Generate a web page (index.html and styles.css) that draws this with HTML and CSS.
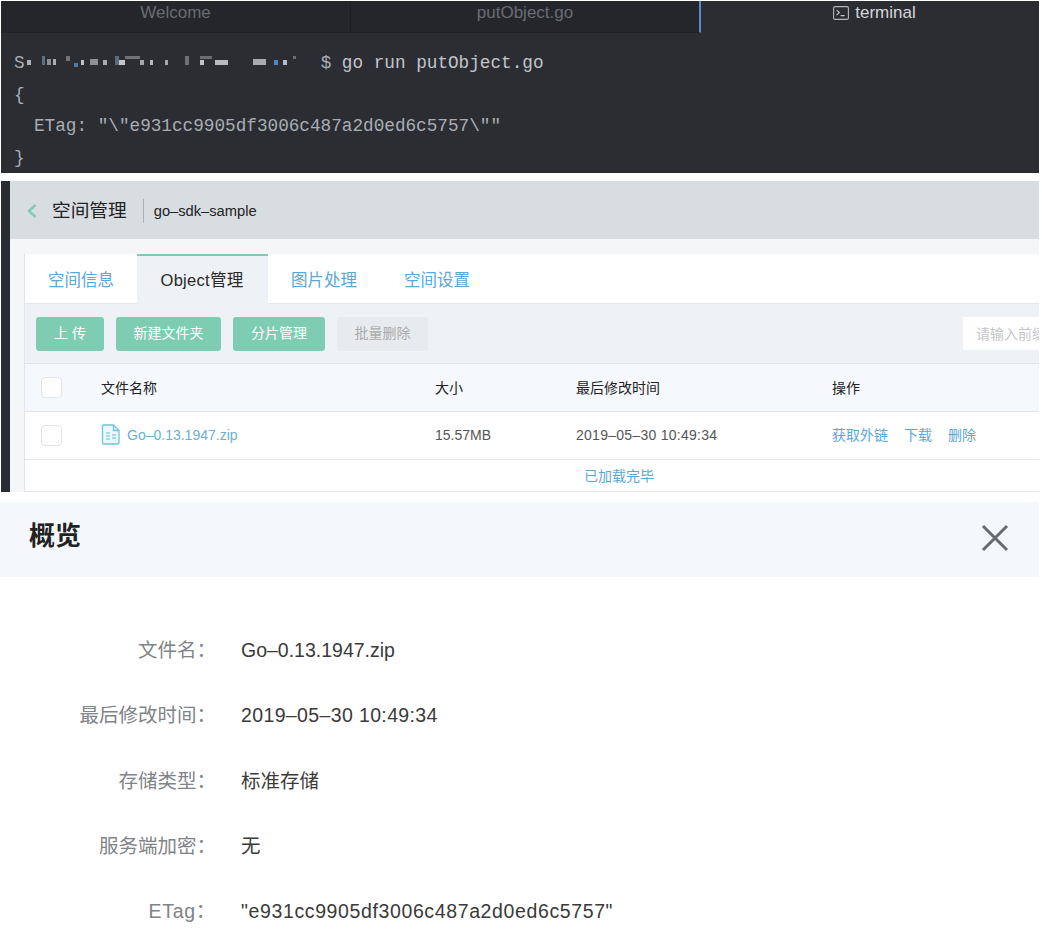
FILE: index.html
```html
<!DOCTYPE html>
<html lang="zh-CN">
<head>
<meta charset="utf-8">
<title>go-sdk-sample</title>
<link rel="stylesheet" href="styles.css">
</head>
<body>
<div class="shot">
  <section class="terminal">
    <div class="term-tabs">
      <div class="term-tab">Welcome</div>
      <div class="term-tab term-tab-last">putObject.go</div>
      <div class="term-tab term-tab-active">
        <svg class="term-icon" width="16" height="14" viewBox="0 0 16 14"><rect x="0.6" y="0.6" width="14.8" height="12.8" rx="1.5" fill="none" stroke="#b4b6ba" stroke-width="1.1"/><path d="M3.6 4.2 6.4 6.6 3.6 9M7.6 9.6h4" fill="none" stroke="#c4c6ca" stroke-width="1.1"/></svg>
        <span>terminal</span>
      </div>
    </div>
    <div class="code">
      <div class="code-line">S<svg class="masked" width="296" height="16" viewBox="0 0 296 16"><rect x="2" y="6" width="4" height="5" fill="#aeb1b5"/><rect x="17" y="2" width="3" height="9" fill="#5f7080"/><rect x="22" y="5" width="4" height="6" fill="#8c9096"/><rect x="28" y="5" width="3" height="6" fill="#a9acb0"/><rect x="41" y="2" width="4" height="5" fill="#6f7278"/><rect x="49" y="9" width="4" height="4" fill="#4e7ba0"/><rect x="56" y="6" width="3" height="5" fill="#c0c2c5"/><rect x="65" y="5" width="8" height="6" fill="#8d9196"/><rect x="78" y="6" width="4" height="5" fill="#a8abaf"/><rect x="90" y="2" width="4" height="9" fill="#5a6b7b"/><rect x="94" y="6" width="6" height="5" fill="#c3c5c8"/><rect x="100" y="2" width="15" height="3" fill="#70747a"/><rect x="115" y="6" width="4" height="5" fill="#a3a6aa"/><rect x="125" y="6" width="3" height="5" fill="#b5b7ba"/><rect x="140" y="6" width="3" height="5" fill="#a5a8ac"/><rect x="160" y="2" width="4" height="9" fill="#6d7076"/><rect x="175" y="6" width="4" height="5" fill="#c0c2c5"/><rect x="175" y="2" width="12" height="3" fill="#6a6e74"/><rect x="190" y="6" width="13" height="5" fill="#b9bbbe"/><rect x="228" y="5" width="13" height="6" fill="#a8abaf"/><rect x="249" y="6" width="4" height="5" fill="#4f86c0"/><rect x="258" y="6" width="4" height="5" fill="#b8babd"/><rect x="268" y="2" width="3" height="3" fill="#6a6e74"/></svg>$ <span class="code-bright">go run putObject.go</span></div>
      <div class="code-line">{</div>
      <div class="code-line code-indent">ETag: "\"e931cc9905df3006c487a2d0ed6c5757\""</div>
      <div class="code-line">}</div>
    </div>
  </section>

  <section class="console">
    <div class="side-bar"></div>
    <div class="console-main">
      <header class="console-head">
        <svg class="back" width="10" height="14" viewBox="0 0 10 14"><path d="M8.5 1 2 7l6.5 6" fill="none" stroke="#7fcdb5" stroke-width="2.4"/></svg>
        <span class="console-title">空间管理</span>
        <span class="console-bucket">go–sdk–sample</span>
      </header>
      <div class="card">
        <nav class="tabs">
          <a class="tab">空间信息</a>
          <a class="tab tab-active">Object管理</a>
          <a class="tab">图片处理</a>
          <a class="tab">空间设置</a>
        </nav>
        <div class="toolbar">
          <span class="btn btn-upload">上 传</span>
          <span class="btn btn-wide">新建文件夹</span>
          <span class="btn">分片管理</span>
          <span class="btn btn-off">批量删除</span>
          <span class="search">请输入前缀搜索</span>
        </div>
        <div class="row row-head">
          <span class="check"></span>
          <span>文件名称</span>
          <span>大小</span>
          <span>最后修改时间</span>
          <span>操作</span>
        </div>
        <div class="row row-body">
          <span class="check"></span>
          <span class="file">
            <svg width="20" height="21" viewBox="0 0 20 21"><path d="M2.5 1h10l5.500 5.500V18a2 2 0 0 1-2 2h-13.500a1 1 0 0 1-1-1V2a1 1 0 0 1 1-1z" fill="#eef8fc" stroke="#6fc4e0" stroke-width="1.3"/><path d="M12.500 1v5.500H18" fill="none" stroke="#6fc4e0" stroke-width="1.3"/><path d="M5 8h4v2H5zM5 11h4v2H5zM5 14h4v2H5z" fill="#a6dbec"/><path d="M11 11h4M11 14h4" stroke="#8ad0e6" stroke-width="1.3"/></svg>
            <span>Go–0.13.1947.zip</span>
          </span>
          <span>15.57MB</span>
          <span class="date">2019–05–30 10:49:34</span>
          <span class="actions"><a>获取外链</a><a>下载</a><a>删除</a></span>
        </div>
        <div class="loaded">已加载完毕</div>
      </div>
    </div>
  </section>

  <section class="overview">
    <header class="overview-head">
      <h2>概览</h2>
      <svg class="close" width="28" height="28" viewBox="0 0 28 28"><path d="M2 2l24 24M26 2 2 26" stroke="#666a6e" stroke-width="3"/></svg>
    </header>
    <dl class="facts">
      <dt>文件名：</dt><dd>Go–0.13.1947.zip</dd>
      <dt>最后修改时间：</dt><dd class="wide-date">2019–05–30 10:49:34</dd>
      <dt>存储类型：</dt><dd>标准存储</dd>
      <dt>服务端加密：</dt><dd>无</dd>
      <dt class="etag-label">ETag：</dt><dd class="etag">"e931cc9905df3006c487a2d0ed6c5757"</dd>
    </dl>
  </section>
</div>
</body>
</html>
```

FILE: styles.css
```css
* { box-sizing: border-box; }
html, body { margin: 0; padding: 0; background: #fff; }
body {
  height: 932px;
  overflow: hidden;
  font-family: "Liberation Sans", "Noto Sans CJK SC", sans-serif;
  color: #333;
}
.shot {
  width: 1039px;
  padding-top: 1px;
  display: flex;
  flex-direction: column;
}

/* terminal */
.terminal {
  margin-left: 1px;
  height: 172px;
  background: #2b2d33;
  overflow: hidden;
}
.term-tabs { display: flex; height: 32px; }
.term-tab {
  flex: 0 0 350px;
  display: flex;
  align-items: center;
  justify-content: center;
  gap: 6px;
  padding-bottom: 8px;
  font-size: 17px;
  color: #696c72;
  background: #24262c;
  border-right: 1px solid #1d1f24;
  border-bottom: 1px solid #1f2126;
}
.term-tab-last { border-right: 2px solid #5b8ad0; }
.term-tab-active {
  flex: 1;
  background: #2b2d33;
  border: 0;
  color: #d4d5d8;
  padding-left: 9px;
}
.code {
  padding: 15px 0 0 13px;
  font-family: "Liberation Mono", monospace;
  font-size: 17.700px;
  line-height: 31.500px;
  color: #a9adb3;
}
.code-line { height: 31.500px; white-space: pre; }
.code-indent { padding-left: 20px; }
.code-bright { color: #c2c5c9; }
.masked { vertical-align: -2px; filter: blur(0.7px); }

/* console */
.console {
  margin-top: 8px;
  margin-left: 1px;
  height: 311px;
  display: flex;
}
.side-bar { flex: 0 0 9px; background: #2a2c33; }
.console-main {
  flex: 1;
  min-width: 0;
  overflow: hidden;
  background: #f5f6f7;
}
.console-head {
  height: 58px;
  background: #d8dde2;
  display: flex;
  align-items: center;
  padding: 2px 0 0 17px;
}
.back { margin-right: 15px; }
.console-title {
  font-size: 18.700px;
  color: #222;
  padding-right: 16px;
  border-right: 1px solid #aab0b5;
  line-height: 24px;
}
.console-bucket { margin-left: 10px; font-size: 14.700px; color: #222; }
.card {
  width: 1190px;
  height: 238px;
  margin: 15px 0 0 14px;
  background: #fff;
  border: 1px solid #e3e5e8;
  border-top: 0;
}
.tabs { display: flex; height: 50px; border-bottom: 1px solid #e3e6ea; }
.tab {
  padding: 0 23.500px;
  line-height: 52px;
  font-size: 16.500px;
  color: #5ba7d6;
}
.tabs .tab:first-child { padding: 0 23px; }
.tab-active {
  height: 50px;
  padding: 0 24px 0 23.500px;
  background: #eef1f5;
  border-top: 2px solid #7ecdb2;
  line-height: 49px;
  letter-spacing: 0.3px;
  color: #2a2a2a;
}
.toolbar {
  height: 60px;
  display: flex;
  align-items: center;
  gap: 12px;
  padding: 0 10px 0 11px;
  background: #eef1f5;
  border-bottom: 1px solid #dfe2e6;
}
.btn {
  flex: 0 0 92px;
  height: 34px;
  line-height: 33px;
  text-align: center;
  font-size: 14px;
  color: #fff;
  background: #7ecdb2;
  border-radius: 3px;
}
.btn-upload { flex-basis: 68px; }
.btn-wide { flex-basis: 105px; }
.btn-off { flex-basis: 91px; background: #e8ebee; color: #aaa; }
.search {
  margin-left: auto;
  width: 240px;
  height: 33px;
  line-height: 34px;
  padding-left: 13px;
  font-size: 14px;
  color: #c4c5c7;
  background: #fff;
}
.row {
  display: grid;
  grid-template-columns: 60px 334px 141px 256px 1fr;
  align-items: center;
  height: 48px;
  padding-left: 16px;
  font-size: 14px;
  line-height: 20px;
  border-bottom: 1px solid #e2e4e7;
}
.row > span:not(.check) { padding-bottom: 2px; }
.row-head { background: #f5f8fc; color: #222; }
.row-head > span:not(.check) { padding-bottom: 0; }
.row-body { color: #555; }
.check {
  width: 21px;
  height: 21px;
  background: #fff;
  border: 1px solid #e2e4e7;
  border-radius: 4px;
}
.file { display: flex; align-items: center; gap: 6px; color: #6bb0d2; }
.date { letter-spacing: 0.27px; }
.actions { display: flex; gap: 16px; color: #5ba7d6; }
.loaded {
  height: 32px;
  line-height: 33px;
  text-align: center;
  font-size: 14px;
  color: #5ba7d6;
}

/* overview */
.overview { margin-top: 10px; }
.overview-head {
  height: 75px;
  display: flex;
  align-items: center;
  justify-content: space-between;
  padding: 0 30px 0 29px;
  background: #f4f8fc;
}
.overview-head h2 {
  margin: 0 0 12px;
  font-size: 26px;
  font-weight: 700;
  color: #222;
}
.close { margin-bottom: 4px; }
.facts {
  margin: 0;
  padding-top: 56px;
  display: grid;
  grid-template-columns: 216px 1fr;
  column-gap: 25px;
  grid-auto-rows: 65.300px;
  font-size: 19.500px;
  line-height: 34px;
}
.facts dt { text-align: right; color: #808387; }
.facts dd { margin: 0; color: #3a3a3a; }
.facts .wide-date { letter-spacing: 0.37px; }
.facts .etag { letter-spacing: 0.62px; }
.facts .etag-label { letter-spacing: 0.7px; }
```
